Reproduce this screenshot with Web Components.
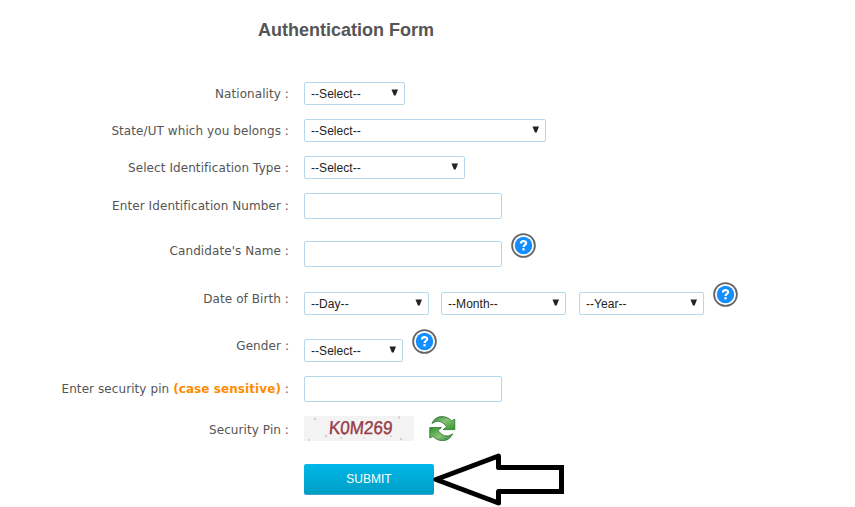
<!DOCTYPE html>
<html lang="en">
<head>
<meta charset="utf-8">
<title>Authentication Form</title>
<style>
  body { margin: 0; background: #fff; overflow: hidden; }
</style>
</head>
<body>
<auth-form></auth-form>

<script>
class HelpIcon extends HTMLElement {
  constructor() {
    super();
    this.attachShadow({ mode: 'open' });
    this.shadowRoot.innerHTML = `
      <style>
        :host { display: block; width: 25px; height: 25px; flex: none; align-self: flex-start; margin-left: 9px; }
        svg { display: block; }
      </style>
      <svg width="25" height="25" viewBox="0 0 25 25">
        <circle cx="12.5" cy="12.5" r="11.4" fill="#fff" stroke="#666" stroke-width="1.8"/>
        <circle cx="12.5" cy="12.5" r="8.7" fill="#148eff"/>
        <path d="M9.9 10.4C9.9 7.4 15.2 7.4 15.2 10.1C15.2 12 12.5 11.9 12.5 14" fill="none" stroke="#fff" stroke-width="2.1"/>
        <rect x="11.4" y="15.2" width="2.2" height="2.2" fill="#fff"/>
      </svg>
    `;
  }
}

class RefreshIcon extends HTMLElement {
  constructor() {
    super();
    this.attachShadow({ mode: 'open' });
    this.shadowRoot.innerHTML = `
      <style>
        :host { display: block; width: 27px; height: 25px; margin-left: 15px; }
        svg { display: block; }
      </style>
      <svg width="27" height="25" viewBox="0 0 27 25">
        <defs>
          <linearGradient id="g" x1="0" y1="0" x2="1" y2="1">
            <stop offset="0" stop-color="#2f7d3c"/>
            <stop offset=".45" stop-color="#86c476"/>
            <stop offset="1" stop-color="#2f9428"/>
          </linearGradient>
          <path id="a" d="M3 7.5C5 2.8 8.5 .6 13 .6C17 .6 20.2 2.2 22.5 4.8L25.8 3.2V13.6H14.2L17.6 10.8C15.2 7.4 12.2 5.2 8.6 5.2C6.4 5.4 4.6 6.2 3 7.5Z"
            fill="url(#g)" stroke="#28702c" stroke-width=".8" stroke-linejoin="round"/>
        </defs>
        <use href="#a"/>
        <use href="#a" transform="rotate(180 13.3 12.6)"/>
      </svg>
    `;
  }
}

class SelectBox extends HTMLElement {
  constructor() {
    super();
    this.attachShadow({ mode: 'open' });
    this.shadowRoot.innerHTML = `
      <style>
        :host {
          display: flex;
          align-items: center;
          justify-content: space-between;
          box-sizing: border-box;
          height: 23px;
          padding: 0 6px;
          border: 1px solid #b5d7ec;
          border-radius: 2px;
          background: #fff;
          font: 12px "Liberation Sans", Arial, sans-serif;
          letter-spacing: .05px;
          color: #222;
        }
        span { padding-top: 1px; }
        svg { display: block; margin-top: -2px; }
      </style>
      <span><slot></slot></span>
      <svg width="7" height="7" viewBox="0 0 7 7"><path d="M.5.5H7L4.6 6.5H2.9Z" fill="#222"/></svg>
    `;
  }

  connectedCallback() {
    this.style.width = `${this.getAttribute('width')}px`;
  }
}

class TextBox extends HTMLElement {
  constructor() {
    super();
    this.attachShadow({ mode: 'open' });
    this.shadowRoot.innerHTML = `
      <style>
        :host { display: block; }
        input {
          display: block;
          box-sizing: border-box;
          width: 198px;
          height: 26px;
          margin: 0;
          padding: 0 6px;
          border: 1px solid #b5d7ec;
          border-radius: 2px;
          background: #fff;
          outline: none;
        }
      </style>
      <input type="text">
    `;
  }
}

class CaptchaImage extends HTMLElement {
  constructor() {
    super();
    this.attachShadow({ mode: 'open' });
    this.shadowRoot.innerHTML = `
      <style>
        :host { display: block; width: 110px; height: 25px; background: #f4f3f4; }
        svg { display: block; }
        text { font: 18.5px "Liberation Sans", Arial, sans-serif; fill: #983c46; stroke: #983c46; stroke-width: .4px; }
      </style>
      <svg width="110" height="25" viewBox="0 0 110 25">
        <g fill="#d9c9cd">
          <circle cx="11" cy="3" r="1.2"/>
          <circle cx="95" cy="1.5" r="1.2"/>
          <circle cx="22" cy="20" r="1.3"/>
          <circle cx="5" cy="24" r="1"/>
          <circle cx="37" cy="22" r="1"/>
          <circle cx="87" cy="20" r="1"/>
          <circle cx="97" cy="23" r="1.2"/>
          <circle cx="60" cy="22" r=".8"/>
        </g>
        <text x="26" y="18.3" textLength="63.5" lengthAdjust="spacingAndGlyphs" transform="skewX(-5)">K0M269</text>
      </svg>
    `;
  }
}

class FormRow extends HTMLElement {
  constructor() {
    super();
    this.attachShadow({ mode: 'open' });
    this.shadowRoot.innerHTML = `
      <style>
        :host { display: grid; grid-template-columns: 289px 1fr; column-gap: 15px; align-items: center; }
        .label {
          font: 12px/16px "DejaVu Sans", Verdana, sans-serif;
          letter-spacing: .08px;
          color: #555;
          text-align: right;
          white-space: nowrap;
        }
        .controls { display: flex; align-items: flex-end; }
        :host([help]) .controls { height: 33px; }
        :host([help="tall"]) .controls { height: 34px; }
        :host([help="tall"]) .label, :host([captcha]) .label { padding-top: 2px; }
      </style>
      <div class="label"><slot name="label"></slot></div>
      <div class="controls"><slot></slot></div>
    `;
  }
}

class SubmitButton extends HTMLElement {
  constructor() {
    super();
    this.attachShadow({ mode: 'open' });
    this.shadowRoot.innerHTML = `
      <style>
        :host { display: block; position: relative; width: 130px; margin: 23px 0 0 304px; }
        button {
          display: block;
          width: 130px;
          height: 31px;
          margin: 0;
          padding: 0;
          border: 0;
          border-bottom: 1px solid #3a9fd0;
          border-radius: 2px;
          background: linear-gradient(#00b7ea, #009ec3);
          font: 12px "Liberation Sans", Arial, sans-serif;
          color: #fff;
        }
        svg { position: absolute; left: 128px; top: -12px; }
      </style>
      <button type="button"><slot></slot></button>
      <svg width="136" height="56" viewBox="0 0 136 56">
        <path d="M4 27.5L66.5 4V15.5H129.5V39.5H66.5V51Z" fill="#fff" stroke="#000" stroke-width="5" stroke-linejoin="round"/>
        <path d="M66.5 15.5H129.5V39.5H66.5" fill="none" stroke="#000" stroke-width="5"/>
      </svg>
    `;
  }
}

class AuthForm extends HTMLElement {
  constructor() {
    super();
    this.attachShadow({ mode: 'open' });
    this.shadowRoot.innerHTML = `
      <style>
        :host { display: block; height: 507px; box-sizing: border-box; padding-top: 20px; }
        h1 {
          margin: 0 0 41px 258px;
          font: bold 18px/21px "Liberation Sans", Arial, sans-serif;
          color: #555;
        }
        .rows { display: flex; flex-direction: column; gap: 14px; }
        .birth { margin-top: 1px; }
        .month { margin-left: 12px; }
        .year { margin-left: 13px; }
        b { color: #ff8c00; }
      </style>
      <h1>Authentication Form</h1>
      <div class="rows">
        <form-row>
          <span slot="label">Nationality :</span>
          <select-box width="101">--Select--</select-box>
        </form-row>
        <form-row>
          <span slot="label">State/UT which you belongs :</span>
          <select-box width="242">--Select--</select-box>
        </form-row>
        <form-row>
          <span slot="label">Select Identification Type :</span>
          <select-box width="161">--Select--</select-box>
        </form-row>
        <form-row>
          <span slot="label">Enter Identification Number :</span>
          <text-box></text-box>
        </form-row>
        <form-row help="tall">
          <span slot="label">Candidate's Name :</span>
          <text-box></text-box>
          <help-icon></help-icon>
        </form-row>
        <form-row class="birth" help>
          <span slot="label">Date of Birth :</span>
          <select-box width="125">--Day--</select-box>
          <select-box class="month" width="125">--Month--</select-box>
          <select-box class="year" width="125">--Year--</select-box>
          <help-icon></help-icon>
        </form-row>
        <form-row help>
          <span slot="label">Gender :</span>
          <select-box width="99">--Select--</select-box>
          <help-icon></help-icon>
        </form-row>
        <form-row>
          <span slot="label">Enter security pin <b>(case sensitive)</b> :</span>
          <text-box></text-box>
        </form-row>
        <form-row captcha>
          <span slot="label">Security Pin :</span>
          <captcha-image></captcha-image>
          <refresh-icon></refresh-icon>
        </form-row>
      </div>
      <submit-button>SUBMIT</submit-button>
    `;
  }
}

customElements.define('help-icon', HelpIcon);
customElements.define('refresh-icon', RefreshIcon);
customElements.define('select-box', SelectBox);
customElements.define('text-box', TextBox);
customElements.define('captcha-image', CaptchaImage);
customElements.define('form-row', FormRow);
customElements.define('submit-button', SubmitButton);
customElements.define('auth-form', AuthForm);
</script>
</body>
</html>
